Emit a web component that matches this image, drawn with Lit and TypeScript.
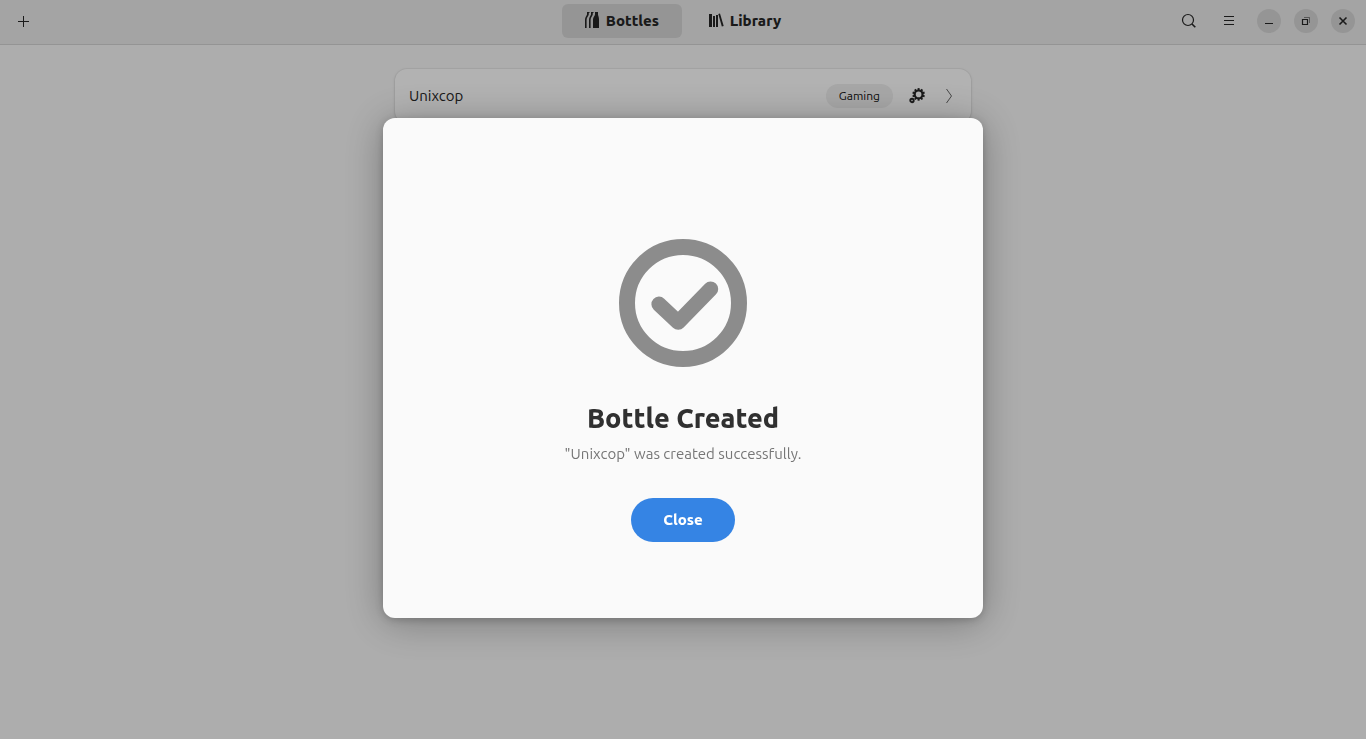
import { LitElement, html, css, svg } from "lit";
import { customElement, property, state } from "lit/decorators.js";
import { classMap } from "lit/directives/class-map.js";

const teeth = [0, 36, 72, 108, 144, 180, 216, 252, 288, 324];

const icons = {
  plus: svg`<path d="M8.5 3v11M3 8.5h11" stroke="currentColor" stroke-width="1" fill="none"/>`,
  bottles: svg`
    <path fill="currentColor" d="M1 15V6.500C1 4 2.600 3 3 1.500V-1h2.500v1H4.800v1.500C4.400 3.500 2.600 4.500 2.600 7v8z"/>
    <path fill="currentColor" d="M5 15V6.500C5 4 6.600 3 7 1.500V-1h2.500v1H8.800v1.500C8.400 3.500 6.600 4.500 6.600 7v8z"/>
    <path fill="currentColor" d="M9 15V6.500C9 4.500 10.600 3 11 1.500V-1h3v2.500c.3 1.500 1 3 1 5V15z"/>`,
  library: svg`
    <path fill="currentColor" d="M1 1h3v13H1zM5 3h2v11H5zM8 2h2v12H8z"/>
    <path fill="currentColor" d="M10.300 1l1.700-.6L15.700 13l-1.900.6z"/>`,
  search: svg`
    <circle cx="7" cy="7" r="5.500" stroke="currentColor" stroke-width="1.200" fill="none"/>
    <path d="M11 11l3.300 3.300" stroke="currentColor" stroke-width="1.600" fill="none"/>`,
  menu: svg`<path d="M3 3.500h10M3 7.500h10M3 11.500h10" stroke="currentColor" stroke-width="1" fill="none"/>`,
  minimize: svg`<path d="M4 10.500h8" stroke="currentColor" stroke-width="1" fill="none"/>`,
  restore: svg`
    <path d="M4.500 6.500h5v5h-5z" stroke="currentColor" stroke-width="1.200" fill="none"/>
    <path d="M6 4.500h5.500V10" stroke="currentColor" stroke-width="1" opacity=".5" fill="none"/>`,
  close: svg`<path d="M4.500 4.500l7 7M11.500 4.500l-7 7" stroke="currentColor" stroke-width="1.600" fill="none"/>`,
  gears: svg`
    <circle cx="9.600" cy="6.400" r="3.900" stroke="currentColor" stroke-width="2.200" fill="none"/>
    ${teeth.map((a) => svg`<path fill="currentColor" d="M8.600 .1h2v2.500h-2z" transform="rotate(${a} 9.600 6.400)"/>`)}
    <circle cx="3" cy="12.500" r="1.700" stroke="currentColor" stroke-width="1.900" fill="none"/>`,
  next: svg`<path d="M5.500 1l5 7-5 7" stroke="currentColor" stroke-width="1" opacity=".7" fill="none"/>`,
  done: svg`
    <circle cx="8" cy="8" r="7" stroke="currentColor" stroke-width="2" fill="none"/>
    <path d="M5 8.150l2.400 2.250 4.050-4.150" stroke="currentColor" stroke-width="1.900" stroke-linecap="round" stroke-linejoin="round" fill="none"/>`,
};

@customElement("app-icon")
export class AppIcon extends LitElement {
  static styles = css`
    :host { display: inline-flex; width: 16px; height: 16px; flex: none; }
    svg { width: 100%; height: 100%; display: block; overflow: visible; }
  `;
  @property() name: keyof typeof icons = "plus";
  render() {
    return html`<svg viewBox="0 0 16 16" aria-hidden="true">${icons[this.name]}</svg>`;
  }
}

@customElement("app-root")
export class AppRoot extends LitElement {
  static styles = css`
    :host {
      display: block;
      min-height: 100vh;
      box-sizing: border-box;
      background: #f8f8f8;
      color: #262626;
      font-family: Ubuntu, "Noto Sans", sans-serif;
      font-size: 15px;
      line-height: 20px;
    }
    button {
      font: inherit;
      color: inherit;
      border: 0;
      margin: 0;
      padding: 0;
      background: none;
      cursor: pointer;
    }
    .header {
      display: grid;
      grid-template-columns: 1fr auto 1fr;
      align-items: center;
      padding: 4px 6px 6px;
      background: #ebebeb;
      border-bottom: 1px solid #d4d4d4;
    }
    .flat {
      width: 34px;
      height: 34px;
      display: grid;
      place-items: center;
      border-radius: 6px;
    }
    .tabs { display: flex; gap: 3px; }
    .tab {
      width: 120px;
      height: 34px;
      display: flex;
      align-items: center;
      justify-content: center;
      gap: 6px;
      border-radius: 6px;
      font-weight: 800;
    }
    .tab.active { background: #d6d6d6; }
    .actions { display: flex; align-items: center; justify-content: flex-end; gap: 6px; }
    .window { display: flex; gap: 13px; padding: 0 5px; }
    .round {
      width: 24px;
      height: 24px;
      display: grid;
      place-items: center;
      border-radius: 50%;
      background: #d6d6d6;
    }
    .content { padding: 24px 12px; }
    .list {
      max-width: 576px;
      margin: 0 auto;
      padding: 0;
      list-style: none;
      background: #fff;
      border-radius: 12px;
      box-shadow: 0 0 0 1px rgba(0, 0, 0, 0.04), 0 1px 3px 1px rgba(0, 0, 0, 0.07);
    }
    .row {
      width: 100%;
      min-height: 54px;
      display: flex;
      align-items: center;
      padding: 0 14px;
      gap: 16px;
      text-align: left;
    }
    .name { flex: 1; }
    .pill {
      padding: 2px 13px;
      border-radius: 12px;
      background: #f0f0f0;
      color: #101010;
      font-size: 12px;
    }
    .scrim {
      position: fixed;
      inset: 0;
      display: grid;
      place-items: center;
      padding-bottom: 3px;
      background: rgba(0, 0, 0, 0.3);
    }
    .dialog {
      width: 600px;
      max-width: 100%;
      min-height: 500px;
      box-sizing: border-box;
      display: flex;
      flex-direction: column;
      align-items: center;
      justify-content: center;
      padding-top: 44px;
      border-radius: 12px;
      background: #fafafa;
      box-shadow: 0 4px 40px rgba(0, 0, 0, 0.3), 0 2px 10px rgba(0, 0, 0, 0.2);
    }
    .mark { width: 128px; height: 128px; color: #8c8c8c; }
    .title { margin: 31px 0 0; color: #303030; font-size: 27px; line-height: 40px; font-weight: 800; }
    .text { margin: 6px 0 0; color: #767676; }
    .close {
      margin-top: 34px;
      padding: 12px 32px;
      border-radius: 22px;
      background: #3584e4;
      color: #fff;
      font-weight: 800;
    }
  `;

  @state() private tab = "Bottles";
  @state() private open = true;

  private renderTab(label: string, icon: string) {
    return html`<button
      role="tab"
      aria-selected=${this.tab === label ? "true" : "false"}
      class=${classMap({ tab: true, active: this.tab === label })}
      @click=${() => (this.tab = label)}
    ><app-icon name=${icon}></app-icon><span>${label}</span></button>`;
  }

  render() {
    return html`
      <header class="header">
        <button class="flat" aria-label="Create bottle"><app-icon name="plus"></app-icon></button>
        <nav class="tabs" role="tablist">
          ${this.renderTab("Bottles", "bottles")}${this.renderTab("Library", "library")}
        </nav>
        <div class="actions">
          <button class="flat" aria-label="Search"><app-icon name="search"></app-icon></button>
          <button class="flat" aria-label="Menu"><app-icon name="menu"></app-icon></button>
          <div class="window">
            <button class="round" aria-label="Minimize"><app-icon name="minimize"></app-icon></button>
            <button class="round" aria-label="Restore"><app-icon name="restore"></app-icon></button>
            <button class="round" aria-label="Close window"><app-icon name="close"></app-icon></button>
          </div>
        </div>
      </header>
      <main class="content">
        <ul class="list">
          <li>
            <button class="row">
              <span class="name">Unixcop</span>
              <span class="pill">Gaming</span>
              <app-icon name="gears"></app-icon>
              <app-icon name="next"></app-icon>
            </button>
          </li>
        </ul>
      </main>
      ${this.open
        ? html`<div class="scrim">
            <section class="dialog" role="dialog" aria-modal="true" aria-labelledby="title">
              <app-icon class="mark" name="done"></app-icon>
              <h1 class="title" id="title">Bottle Created</h1>
              <p class="text">"Unixcop" was created successfully.</p>
              <button class="close" @click=${() => (this.open = false)}>Close</button>
            </section>
          </div>`
        : null}
    `;
  }
}
